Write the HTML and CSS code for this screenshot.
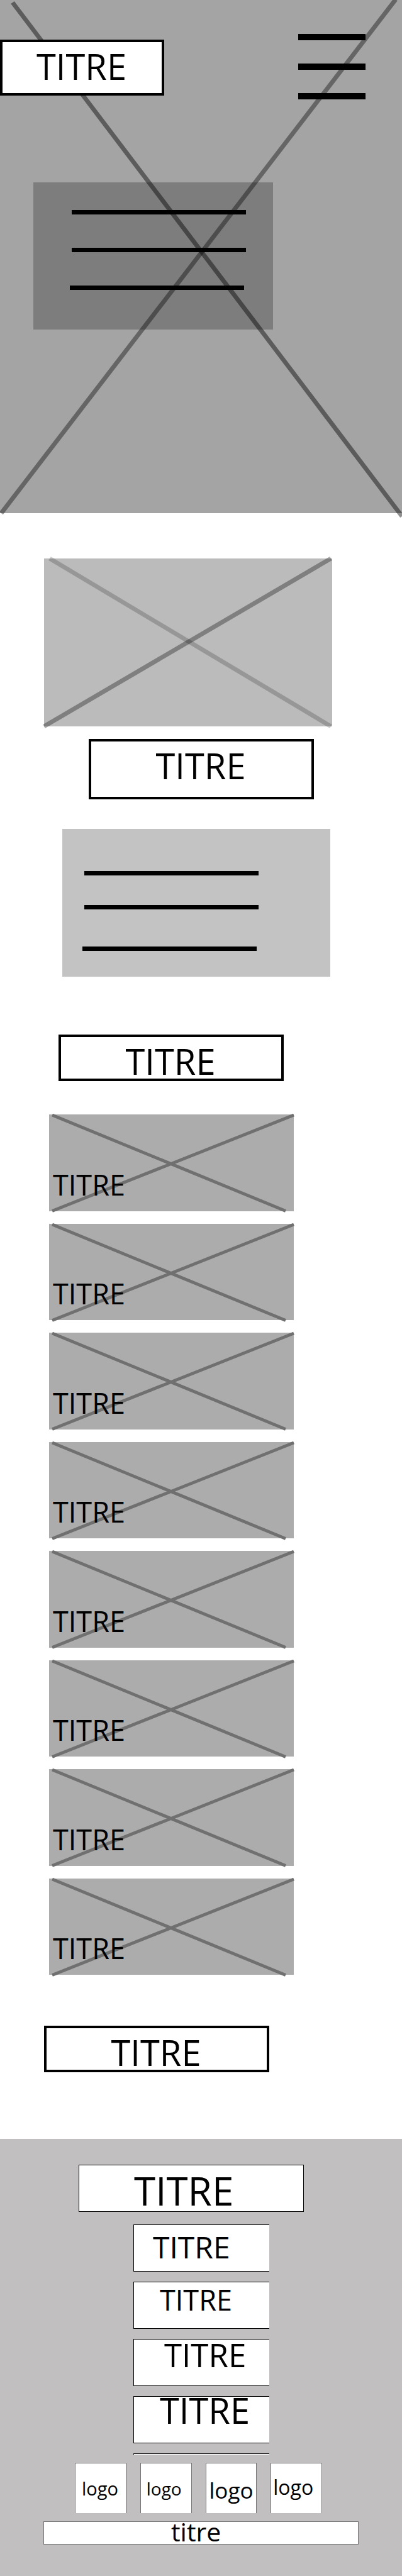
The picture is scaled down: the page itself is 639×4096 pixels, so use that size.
FILE: index.html
```html
<!DOCTYPE html>
<html lang="fr">
<head>
<meta charset="utf-8">
<meta name="viewport" content="width=device-width, initial-scale=1">
<title>Titre</title>
<link rel="stylesheet" href="styles.css">
</head>
<body>
<header class="hero">
  <svg class="cross" viewBox="0 0 639 816" preserveAspectRatio="none" aria-hidden="true">
    <path d="M20 4L639 821" stroke="#000" stroke-opacity=".44" stroke-width="7"/>
    <path d="M629 -1L2 816" stroke="#000" stroke-opacity=".38" stroke-width="7"/>
  </svg>
  <div class="topbar">
    <h1 class="title title-brand">TITRE</h1>
    <button class="burger" type="button" aria-label="Menu"><span></span><span></span><span></span></button>
  </div>
  <div class="panel panel-hero">
    <span class="line"></span><span class="line"></span><span class="line"></span>
  </div>
</header>

<main>
  <section class="intro">
    <div class="picture">
      <svg class="cross" viewBox="0 0 458 267" preserveAspectRatio="none" aria-hidden="true">
        <path d="M9 0L456 267" stroke="#000" stroke-opacity=".19" stroke-width="7"/>
        <path d="M0 267L456 0" stroke="#000" stroke-opacity=".32" stroke-width="7"/>
      </svg>
    </div>
    <h2 class="title title-intro">TITRE</h2>
    <div class="panel panel-text">
      <span class="line"></span><span class="line"></span><span class="line line-spaced"></span>
    </div>
  </section>

  <section>
    <h2 class="title title-list">TITRE</h2>
    <div class="cards">
      <a class="card" href="#"><svg class="cross" viewBox="0 0 388 153" preserveAspectRatio="none" aria-hidden="true"><path d="M5 1L375 153M5 153L388 1" stroke="#707070" stroke-width="5"/></svg><span class="card-label">TITRE</span></a>
      <a class="card" href="#"><svg class="cross" viewBox="0 0 388 153" preserveAspectRatio="none" aria-hidden="true"><path d="M5 1L375 153M5 153L388 1" stroke="#707070" stroke-width="5"/></svg><span class="card-label">TITRE</span></a>
      <a class="card" href="#"><svg class="cross" viewBox="0 0 388 153" preserveAspectRatio="none" aria-hidden="true"><path d="M5 1L375 153M5 153L388 1" stroke="#707070" stroke-width="5"/></svg><span class="card-label">TITRE</span></a>
      <a class="card" href="#"><svg class="cross" viewBox="0 0 388 153" preserveAspectRatio="none" aria-hidden="true"><path d="M5 1L375 153M5 153L388 1" stroke="#707070" stroke-width="5"/></svg><span class="card-label">TITRE</span></a>
      <a class="card" href="#"><svg class="cross" viewBox="0 0 388 153" preserveAspectRatio="none" aria-hidden="true"><path d="M5 1L375 153M5 153L388 1" stroke="#707070" stroke-width="5"/></svg><span class="card-label">TITRE</span></a>
      <a class="card" href="#"><svg class="cross" viewBox="0 0 388 153" preserveAspectRatio="none" aria-hidden="true"><path d="M5 1L375 153M5 153L388 1" stroke="#707070" stroke-width="5"/></svg><span class="card-label">TITRE</span></a>
      <a class="card" href="#"><svg class="cross" viewBox="0 0 388 153" preserveAspectRatio="none" aria-hidden="true"><path d="M5 1L375 153M5 153L388 1" stroke="#707070" stroke-width="5"/></svg><span class="card-label">TITRE</span></a>
      <a class="card" href="#"><svg class="cross" viewBox="0 0 388 153" preserveAspectRatio="none" aria-hidden="true"><path d="M5 1L375 153M5 153L388 1" stroke="#707070" stroke-width="5"/></svg><span class="card-label">TITRE</span></a>
    </div>
  </section>

  <h2 class="title title-end">TITRE</h2>
</main>

<footer class="footer">
  <h2 class="footer-title">TITRE</h2>
  <nav class="links">
    <a class="link link-a" href="#">TITRE</a>
    <a class="link link-b" href="#">TITRE</a>
    <a class="link link-c" href="#">TITRE</a>
    <a class="link link-d" href="#">TITRE</a>
    <span class="link-edge"></span>
  </nav>
  <div class="logos">
    <a class="logo logo-a" href="#">logo</a>
    <a class="logo logo-b" href="#">logo</a>
    <a class="logo logo-c" href="#">logo</a>
    <a class="logo logo-d" href="#">logo</a>
  </div>
  <p class="legal">titre</p>
</footer>
</body>
</html>
```

FILE: styles.css
```css
* { box-sizing: border-box; }

body {
  margin: 0;
  background: #fff;
  color: #000;
  font-family: "Open Sans", "Noto Sans", sans-serif;
}

a { color: inherit; text-decoration: none; }

main { display: flow-root; }

/* Crossed placeholder lines lying over a grey block */
.cross {
  position: absolute;
  inset: 0;
  width: 100%;
  height: 100%;
  overflow: visible;
}

/* Framed titles */
.title {
  margin: 0;
  padding: 10px 2px 0 0;
  border: 4px solid #000;
  background: #fff;
  font-size: 56px;
  line-height: 56px;
  font-weight: 400;
  text-align: center;
}

.title-brand { width: 261px; min-height: 89px; margin-top: 9px; }
.title-intro { min-height: 96px; margin: 20px 140px 0 141px; }
.title-list { min-height: 74px; margin: 92px 188px 0 93px; }
.title-end { min-height: 74px; margin: 81px 211px 106px 70px; }

/* Hero */
.hero {
  position: relative;
  min-height: 816px;
  padding-top: 54px;
  background: #a4a4a4;
}

.topbar {
  position: relative;
  display: flex;
  align-items: flex-start;
  justify-content: space-between;
  padding-right: 58px;
}

.burger {
  display: flex;
  flex-direction: column;
  gap: 37px;
  width: 107px;
  padding: 0;
  border: 0;
  background: none;
  cursor: pointer;
}

.burger span { height: 10px; background: #000; }

/* Text placeholders */
.panel {
  position: relative;
  display: flex;
  flex-direction: column;
}

.panel-hero {
  gap: 53px;
  min-height: 234px;
  margin: 132px 205px 0 53px;
  padding: 44px 43px 0 61px;
  background: rgba(0, 0, 0, .235);
}

.panel-text {
  gap: 47px;
  min-height: 235px;
  margin: 47px 114px 0 99px;
  padding: 67px 114px 0 35px;
  background: #c3c3c3;
}

.line { height: 7px; background: #000; }
.line:last-child { margin-left: -3px; margin-right: 3px; }
.line-spaced { margin-top: 12px; }

.intro { padding-top: 72px; }

.picture {
  position: relative;
  height: 267px;
  margin: 0 111px 0 70px;
  background: #bbb;
}

/* Card list */
.cards {
  display: grid;
  grid-auto-rows: 1fr;
  gap: 20px;
  min-height: 1368px;
  margin: 53px 172px 0 78px;
}

.card {
  position: relative;
  display: flex;
  align-items: flex-end;
  padding: 0 6px 14px;
  background: #acacac;
}

.card-label {
  position: relative;
  font-size: 45px;
  line-height: 56px;
}

/* Footer */
.footer {
  min-height: 695px;
  padding: 41px 0 50px;
  background: #c1bfc0;
}

.footer-title {
  min-height: 75px;
  margin: 0 156px 0 125px;
  padding: 9px 0 0 87px;
  border: 1px solid #000;
  background: #fff;
  font-size: 62px;
  line-height: 62px;
  font-weight: 400;
}

.links {
  display: flex;
  flex-direction: column;
  gap: 16px;
  margin: 20px 211px 0 212px;
}

.link {
  height: 75px;
  border: 1px solid #000;
  border-right: 0;
  background: #fff;
  line-height: 40px;
}

.link-a { padding: 15px 0 0 30px; font-size: 48px; }
.link-b { padding: 8px 0 0 41px; font-size: 45px; }
.link-c { padding: 4px 0 0 48px; font-size: 51px; }
.link-d { padding: 1px 0 0 41px; font-size: 56px; }

.link-edge {
  height: 2px;
  border-top: 1px solid #000;
  border-left: 1px solid #000;
  background: #fff;
}

.logos {
  display: grid;
  grid-template-columns: repeat(4, 1fr);
  gap: 22px;
  margin: 13px 127px 0 119px;
}

.logo {
  height: 80px;
  border: 1px solid #757575;
  border-bottom: 0;
  background: #fff;
  line-height: 32px;
}

.logo-a { padding: 24px 0 0 10px; font-size: 29px; }
.logo-b { padding: 24px 0 0 9px; font-size: 28px; }
.logo-c { padding: 27px 0 0 5px; font-size: 35px; }
.logo-d { padding: 22px 0 0 3px; font-size: 32px; }

.legal {
  min-height: 37px;
  margin: 13px 69px 0;
  padding-left: 202px;
  border: 1px solid #757575;
  background: #fff;
  font-size: 41px;
  line-height: 30px;
}
```
